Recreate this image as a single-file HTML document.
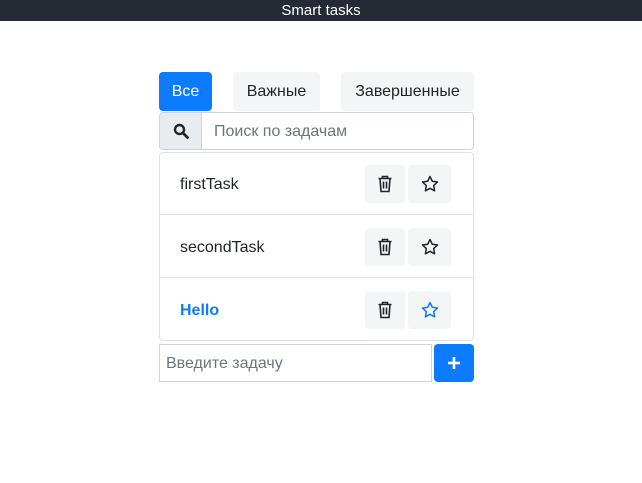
<!DOCTYPE html><html><head><meta charset="utf-8"><style>
*{box-sizing:border-box;margin:0;padding:0}
body{width:642px;height:483px;background:#fff;font-family:"Liberation Sans",sans-serif;position:relative;overflow:hidden;color:#212529}
.hd{position:absolute;left:0;top:0;width:642px;height:21px;background:#252a35;color:#fff;text-align:center;font-size:15px;line-height:21px}
.a{position:absolute}
.btn{position:absolute;border-radius:4px;background:#f4f5f7;font-size:16px;text-align:center;line-height:39px;color:#212529}
.row{position:absolute;left:159px;width:315px;height:63px}
.row span{position:absolute;left:21px;top:2px;line-height:62px;font-size:16px}
.ib{position:absolute;top:12px;height:38px;border-radius:4px;background:#f4f5f7;display:flex;align-items:center;justify-content:center}
</style></head><body>
<div class="hd">Smart tasks</div>
<div class="btn" style="left:159px;top:72px;width:53px;background:#0d7bfd;color:#fff">Все</div>
<div class="btn" style="left:233px;top:72px;width:87px">Важные</div>
<div class="btn" style="left:341px;top:72px;width:133px">Завершенные</div>
<div class="a" style="left:159px;top:112px;width:315px;height:38px;border:1px solid #ced4da;border-radius:4px;overflow:hidden">
<div class="a" style="left:0;top:0;width:42px;height:36px;background:#e9ecef;border-right:1px solid #ced4da;display:flex;align-items:center;justify-content:center">
<svg width="16" height="16" viewBox="0 0 16 16"><circle cx="6.5" cy="6.5" r="4.5" fill="none" stroke="#212529" stroke-width="2.4"/><path d="M10 10l4.5 4.5" stroke="#212529" stroke-width="2.8" stroke-linecap="round"/></svg></div>
<div class="a" style="left:54px;top:1px;line-height:36px;font-size:16px;color:#6c757d">Поиск по задачам</div></div>
<div class="a" style="left:159px;top:152px;width:315px;height:189px;border:1px solid #dee2e6;border-radius:4px"></div>
<div class="row" style="top:152px;border-bottom:1px solid #dee2e6"><span>firstTask</span></div>
<div class="row" style="top:215px;border-bottom:1px solid #dee2e6"><span>secondTask</span></div>
<div class="row" style="top:278px"><span style="color:#0d7bfd;font-weight:bold">Hello</span></div>
<div id="ic"></div>
<script>
var h='';[152,215,278].forEach(function(t,i){var c=i==2?'#0d7bfd':'#212529';
h+='<div class="ib a" style="left:365px;top:'+(t+13)+'px;width:40px"><svg width="16" height="18" viewBox="0 0 16 18"><path d="M1.5 3.5h13M5.5 3.5V1.5h5v2M3 3.5l1 13h8l1-13M6.5 6.5v7M9.5 6.5v7" fill="none" stroke="#212529" stroke-width="1.6"/></svg></div>';
h+='<div class="ib a" style="left:408px;top:'+(t+13)+'px;width:43px"><svg width="18" height="18" viewBox="0 0 18 18"><path d="M9 1.5l2.3 4.8 5.2.7-3.8 3.6.9 5.2L9 13.3l-4.6 2.5.9-5.2L1.5 7l5.2-.7z" fill="none" stroke="'+c+'" stroke-width="1.5" stroke-linejoin="round"/></svg></div>';});
document.getElementById('ic').innerHTML=h;
</script>
<div class="a" style="left:159px;top:344px;width:273px;height:38px;border:1px solid #ced4da;line-height:37px;padding-left:6px;font-size:16px;color:#6c757d">Введите задачу</div>
<div class="a" style="left:434px;top:344px;width:40px;height:38px;background:#0d7bfd;border-radius:4px;display:flex;align-items:center;justify-content:center"><svg width="14" height="14" viewBox="0 0 14 14"><path d="M7 1v12M1 7h12" stroke="#fff" stroke-width="2.6"/></svg></div>
</body></html>
